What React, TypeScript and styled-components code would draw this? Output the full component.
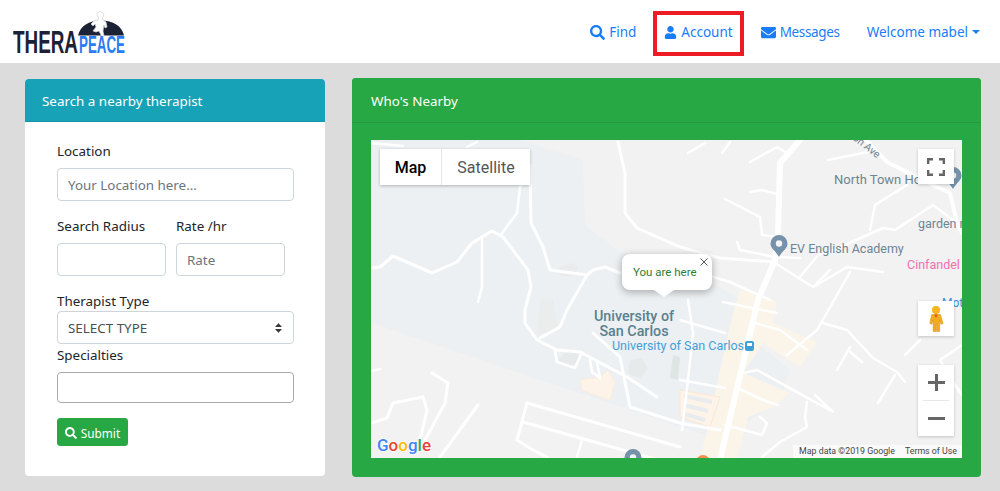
import React from "react";
import styled, { createGlobalStyle } from "styled-components";
import { FaSearch, FaUser, FaEnvelope } from "react-icons/fa";

const Global = createGlobalStyle`
  html, body { margin: 0; padding: 0; background: #dcdcdc; }
  body { font-family: "Noto Sans", "Open Sans", sans-serif; color: #212529; overflow: hidden; }
  * { box-sizing: border-box; }
`;

const Page = styled.div`
  width: 1000px;
  height: 491px;
  display: flex;
  flex-direction: column;
`;
const Navbar = styled.nav`
  height: 63px;
  background: #fff;
  display: flex;
  align-items: center;
  justify-content: space-between;
  padding: 0 9px 0 13px;
`;
const LogoArt = styled.svg`
  display: block;
`;
const NavList = styled.div`
  display: flex;
  align-items: center;
  margin-top: 4px;
`;
const NavLink = styled.a<{ $boxed?: boolean; $ml?: number; $tight?: boolean }>`
  display: flex;
  align-items: center;
  gap: 4px;
  height: 45px;
  margin-left: ${p => p.$ml ?? 0}px;
  padding: 0 7px 3px;
  color: #1a7cf8;
  font-size: 13.5px;
  letter-spacing: ${p => (p.$tight ? "-0.35px" : "0")};
  white-space: nowrap;
  border: 4px solid ${p => (p.$boxed ? "#ed1c24" : "transparent")};
`;
const Caret = styled.span`
  width: 0;
  height: 0;
  border-top: 4.5px solid #1a7cf8;
  border-left: 4px solid transparent;
  border-right: 4px solid transparent;
`;
const Main = styled.main`
  flex: 1;
  display: flex;
  align-items: flex-start;
  gap: 27px;
  padding: 15px 0 0 25px;
`;
const SearchCard = styled.section`
  width: 300px;
  height: 397px;
  margin-top: 1px;
  background: #fff;
  border-radius: 4px;
  overflow: hidden;
`;
const CardHeader = styled.header<{ $bg: string; $pl: number; $h: number }>`
  height: ${p => p.$h}px;
  background: ${p => p.$bg};
  color: #fff;
  font-size: 13.4px;
  display: flex;
  align-items: center;
  padding: 2px 0 0 ${p => p.$pl}px;
  border-bottom: 1px solid rgba(0, 0, 0, 0.08);
`;
const Form = styled.form`
  padding: 19px 31px 0 32px;
  display: flex;
  flex-direction: column;
`;
const Label = styled.label<{ $mt?: number; $mb?: number }>`
  display: block;
  height: 20px;
  line-height: 20px;
  font-size: 13.4px;
  color: #212529;
  margin-top: ${p => p.$mt ?? 0}px;
  margin-bottom: ${p => p.$mb ?? 0}px;
`;
const Input = styled.input<{ $h?: number; $dark?: boolean }>`
  display: block;
  width: 100%;
  height: ${p => p.$h ?? 33}px;
  padding: 0 10px;
  font: 13.4px "Noto Sans", sans-serif;
  color: #495057;
  background: #fff;
  border: 1px solid ${p => (p.$dark ? "#a9a9a9" : "#ced4da")};
  border-radius: 4px;
  outline: none;
  &::placeholder { color: #6c757d; opacity: 1; }
`;
const Row = styled.div`
  display: grid;
  grid-template-columns: 109px 109px;
  gap: 10px;
`;
const SelectWrap = styled.div`
  position: relative;
  height: 33px;
`;
const Select = styled.select`
  display: block;
  width: 100%;
  height: 33px;
  padding: 0 10px;
  font: 13.4px "Noto Sans", sans-serif;
  color: #495057;
  background: #fff;
  border: 1px solid #ced4da;
  border-radius: 4px;
  appearance: none;
  outline: none;
`;
const SelectArrow = styled.svg`
  position: absolute;
  right: 12px;
  top: 12px;
`;
const Submit = styled.button`
  align-self: flex-start;
  margin-top: 15px;
  width: 71px;
  height: 28px;
  display: flex;
  align-items: center;
  justify-content: center;
  gap: 4px;
  padding: 1px 0 0;
  background: #28a745;
  color: #fff;
  border: 1px solid #28a745;
  border-radius: 3px;
  font: 11.8px "Noto Sans", sans-serif;
`;
const MapCard = styled.section`
  width: 629px;
  height: 399px;
  background: #28a745;
  border-radius: 4px;
  overflow: hidden;
`;
const MapBody = styled.div`
  padding: 17px 19px 0;
`;
const MapFrame = styled.div`
  position: relative;
  width: 591px;
  height: 318px;
  background: #f2f2f2;
  overflow: hidden;
  font-family: Roboto, sans-serif;
`;
const MapArt = styled.svg`
  display: block;
  font-family: Roboto, sans-serif;
`;
const MapType = styled.div`
  position: absolute;
  left: 9px;
  top: 9px;
  height: 36px;
  width: 150px;
  display: flex;
  background: #fff;
  box-shadow: 0 1px 3px rgba(0, 0, 0, 0.25);
`;
const MapTab = styled.div<{ $active?: boolean; $w: number }>`
  width: ${p => p.$w}px;
  display: flex;
  align-items: center;
  justify-content: center;
  font-size: 16px;
  font-weight: ${p => (p.$active ? 500 : 400)};
  color: ${p => (p.$active ? "#000" : "#565656")};
  border-right: ${p => (p.$active ? "1px solid #e6e6e6" : "none")};
`;
const MapControl = styled.div<{ $top: number; $h: number }>`
  position: absolute;
  left: 547px;
  top: ${p => p.$top}px;
  width: 36px;
  height: ${p => p.$h}px;
  background: #fff;
  box-shadow: 0 1px 3px rgba(0, 0, 0, 0.2);
  display: flex;
  flex-direction: column;
  align-items: center;
  justify-content: center;
`;
const ZoomBtn = styled.div`
  height: 35px;
  width: 26px;
  display: flex;
  align-items: center;
  justify-content: center;
`;
const ZoomRule = styled.div`
  width: 26px;
  height: 1px;
  background: #e6e6e6;
`;
const InfoWindow = styled.div`
  position: absolute;
  left: 251px;
  top: 114px;
  width: 90px;
  height: 36px;
  background: #fff;
  border-radius: 8px;
  box-shadow: 0 2px 7px 1px rgba(0, 0, 0, 0.25);
  display: flex;
  align-items: center;
  padding: 0 0 0 11px;
  font-size: 11.5px;
  color: #2f7d32;
  &::after {
    content: "";
    position: absolute;
    left: 32px;
    top: 36px;
    border-top: 7px solid #fff;
    border-left: 10px solid transparent;
    border-right: 10px solid transparent;
  }
`;
const InfoClose = styled.svg`
  position: absolute;
  right: 4px;
  top: 4px;
`;
const Attribution = styled.div`
  position: absolute;
  right: 0;
  bottom: 0;
  height: 13px;
  line-height: 13px;
  display: flex;
  gap: 10px;
  padding: 0 5px 0 6px;
  font-size: 8.8px;
  color: #444;
  background: rgba(255, 255, 255, 0.6);
`;

type Road = { w: number; p: string };
const ROADS: Road[] = [
  { w: 2.5, p: "371,143 403,146" },
  { w: 2.5, p: "467,147 477,142" },
  { w: 3, p: "530,165 531,223 543,247 550,270 587,275 593,270 605,267 620,273" },
  { w: 2.5, p: "530,170 520,187 517,213 500,236" },
  { w: 3, p: "371,268 380,267 393,256 432,273 457,262 472,243 492,231 503,237 528,270 531,287 525,310 525,323 537,340 557,350 580,352 627,377 657,397" },
  { w: 2.5, p: "482,240 482,287 478,302" },
  { w: 3, p: "587,275 567,310 560,327 540,338" },
  { w: 3, p: "618,142 625,173 625,213 637,228 680,247 720,258 775,262" },
  { w: 6, p: "800,140 780,163 778,237 775,260 758,300 720,460" },
  { w: 4, p: "866,140 887,162 933,185 950,193 957,223 962,233" },
  { w: 2.5, p: "828,160 853,155 868,152" },
  { w: 2.5, p: "750,162 777,147 787,153" },
  { w: 2.5, p: "688,153 705,143" },
  { w: 2.5, p: "722,153 730,142" },
  { w: 2.5, p: "750,192 762,190 777,194" },
  { w: 2.5, p: "725,199 760,217 762,235 778,237" },
  { w: 2.5, p: "737,242 740,250 775,257 800,258" },
  { w: 2.5, p: "800,277 818,255 827,253 883,228 895,230 933,205 962,227" },
  { w: 2.5, p: "870,230 875,205 907,185" },
  { w: 2.5, p: "775,263 813,287 847,267 883,272" },
  { w: 2.5, p: "813,287 830,270" },
  { w: 2.5, p: "833,302 817,330 787,355" },
  { w: 2.5, p: "850,272 833,302" },
  { w: 2.5, p: "723,302 777,313" },
  { w: 2.5, p: "690,270 730,282 770,300" },
  { w: 2.5, p: "755,323 780,330 807,350" },
  { w: 2.5, p: "823,323 847,330 873,358 897,372 905,382" },
  { w: 2.5, p: "837,370 850,347" },
  { w: 2.5, p: "848,350 862,362" },
  { w: 2.5, p: "878,403 895,375" },
  { w: 2.5, p: "743,373 757,370 833,412 815,395" },
  { w: 2.5, p: "807,402 805,417 807,427 780,442 762,457" },
  { w: 2.5, p: "738,388 763,400 778,405" },
  { w: 2.5, p: "680,320 725,333" },
  { w: 2.5, p: "680,380 725,388" },
  { w: 2.5, p: "725,425 762,435 767,423 760,417" },
  { w: 2.5, p: "688,300 693,333 688,380 682,430" },
  { w: 3, p: "593,333 620,357 630,407 680,423 720,430" },
  { w: 3, p: "527,403 680,447" },
  { w: 3, p: "523,422 680,466" },
  { w: 3, p: "527,403 517,440 533,450 547,457" },
  { w: 2.5, p: "582,440 577,457" },
  { w: 3, p: "371,423 387,418 393,403 423,397 427,410 420,440" },
  { w: 3, p: "432,373 448,383 445,403 425,440" },
  { w: 3, p: "478,405 440,457" },
  { w: 2.5, p: "371,371 380,369" },
  { w: 2.5, p: "555,351 557,362 575,368 582,352" },
  { w: 2.5, p: "590,360 592,372 600,378 597,362" },
  { w: 2.5, p: "920,340 905,355" },
  { w: 2.5, p: "962,345 940,360 955,385 962,395" },
];

const FrameIcon = () => (
  <svg width="18" height="18" viewBox="0 0 18 18" fill="none" stroke="#666" strokeWidth="2.4">
    <path d="M1.2 6V1.2H6M12 1.2h4.8V6M16.8 12v4.8H12M6 16.8H1.2V12" />
  </svg>
);
const Pegman = () => (
  <svg width="16" height="28" viewBox="0 0 18 30">
    <circle cx="9" cy="5" r="4.6" fill="#f7b521" />
    <path d="M4 10h10l3 10-2.4 1-1.4-5V29h-3.4v-9h-.6v9H5.800V16l-1.400 5L2 20z" fill="#f5ac1b" stroke="#c98a12" strokeWidth=".5" />
    <path d="M7 10h4l-2 4z" fill="#d9541e" />
  </svg>
);
const Pin = ({ x, y }: { x: number; y: number }) => (
  <g transform={`translate(${x} ${y})`}>
    <path d="M0 22C-3 16-8.500 14-8.500 8.500a8.500 8.500 0 1 1 17 0C8.500 14 3 16 0 22Z" fill="#7592aa" />
    <circle cx="0" cy="8.500" r="3.200" fill="#f2f4f5" />
  </g>
);

export default function App() {
  return (
    <Page>
      <Global />
      <Navbar>
        <LogoArt width="114" height="46" viewBox="0 0 114 46">
          <path d="M65 26.500C67 17 76 11.500 88 11.500S109 17 111 26.500Z" fill="#1d2136" />
          <path d="M80 22l3-4-1-3-2 2-2-2 3-3 4-1 1-2a3.300 3.300 0 1 1 4-1l-1 2 4 3 1 5-2 1-1-3-1 6 1 5-2 1-3-6-3 1z" fill="#fff" stroke="#cfcfd4" strokeWidth=".7" />
          <text transform="translate(0 43.5) scale(.609 1)" fontFamily="Liberation Sans" fontWeight="700" fontSize="31" fill="#1d2136">THERA</text>
          <text transform="translate(66 43.5) scale(.568 1)" fontFamily="Liberation Sans" fontWeight="700" fontSize="23.500" fill="#2b7bf3">PEACE</text>
        </LogoArt>
        <NavList>
          <NavLink><FaSearch size={15} />Find</NavLink>
          <NavLink $boxed $ml={6}><FaUser size={13} />Account</NavLink>
          <NavLink $ml={6} $tight><FaEnvelope size={15} />Messages</NavLink>
          <NavLink $ml={5}>Welcome mabel<Caret /></NavLink>
        </NavList>
      </Navbar>
      <Main>
        <SearchCard>
          <CardHeader $bg="#17a2b8" $pl={17} $h={43}>Search a nearby therapist</CardHeader>
          <Form>
            <Label $mb={7}>Location</Label>
            <Input placeholder="Your Location here..." />
            <Row>
              <div>
                <Label $mt={15} $mb={7}>Search Radius</Label>
                <Input />
              </div>
              <div>
                <Label $mt={15} $mb={7}>Rate /hr</Label>
                <Input placeholder="Rate" />
              </div>
            </Row>
            <Label $mt={15}>Therapist Type</Label>
            <SelectWrap>
              <Select defaultValue="type"><option value="type">SELECT TYPE</option></Select>
              <SelectArrow width="7" height="10" viewBox="0 0 8 11"><path d="M4 0 8 4.300H0ZM4 11 0 6.700H8Z" fill="#343a40" /></SelectArrow>
            </SelectWrap>
            <Label $mt={1} $mb={7}>Specialties</Label>
            <Input $h={31} $dark />
            <Submit type="button"><FaSearch size={12} />Submit</Submit>
          </Form>
        </SearchCard>
        <MapCard>
          <CardHeader $bg="#28a745" $pl={19} $h={45}>Who's Nearby</CardHeader>
          <MapBody>
            <MapFrame>
              <MapArt width="591" height="318" viewBox="371 140 591 318">
                <path d="M371 140H520L583 160 585 225 620 252 680 262 740 300 760 345 790 370 780 400 720 440 371 323Z" fill="#ecf0f3" />
                <path d="M740 290H752L757 300H777L773 323 817 342 800 367 763 343 743 373 790 393 773 407 748 417 737 458H700L707 432 718 380 733 313Z" fill="#fbf5e9" />
                <path d="M580 380 600 377 608 370 615 383 610 400 600 397 582 390Z" fill="#fdf3e8" stroke="#fcecdc" />
                <path d="M680 390 720 397 710 427 680 417Z" fill="#fdf3e8" stroke="#fae8d6" />
                <path d="M684 396 712 402M684 405 708 411M684 414 705 420" stroke="#e9ecee" strokeWidth="4" />
                <path d="M540 300 553 299 558 330 538 334Z" fill="#ebeded" />
                <path d="M558 268 572 263 578 267 574 276 560 276Z" fill="#e9ebec" />
                <path d="M568 350 578 352 578 362 570 366 558 360Z" fill="#e7eaea" />
                <path d="M630 360 642 358 648 368 640 378 628 374Z" fill="#e7eaea" />
                <path d="M673 355 680 357 678 380 670 378Z" fill="#dfe5e2" />
                <g fill="none" stroke="#fff" strokeLinecap="round" strokeLinejoin="round">
                  {ROADS.map((r, i) => <polyline key={i} points={r.p} strokeWidth={r.w} />)}
                </g>
                <text x="834" y="184" fontSize="13" fill="#6f8492">North Town Ho</text>
                <text x="790" y="253" fontSize="12.500" fill="#6f8492">EV English Academy</text>
                <text x="918" y="227.500" fontSize="12.500" fill="#6f8492">garden m</text>
                <text x="907" y="269" fontSize="12.500" fill="#ee6fb0">Cinfandel</text>
                <text x="942" y="307" fontSize="12" fill="#3a8fd8">Mot</text>
                <text x="852" y="139" fontSize="10.500" fill="#6f8492" transform="rotate(38 852 139)">on Ave</text>
                <text x="634" y="321" fontSize="14.300" fontWeight="500" fill="#5a8090" textAnchor="middle">University of</text>
                <text x="634" y="336" fontSize="14.300" fontWeight="500" fill="#5a8090" textAnchor="middle">San Carlos</text>
                <text x="612" y="350" fontSize="12.500" fill="#3f9fd9">University of San Carlos</text>
                <rect x="745" y="341" width="9" height="10" rx="2" fill="#3f9fd9" />
                <rect x="747" y="343" width="5" height="3" fill="#fff" />
                <Pin x={779} y={235} />
                <Pin x={953} y={167} />
                <Pin x={633} y={449} />
                <circle cx="703" cy="462" r="7" fill="#f2914c" />
                <text x="377" y="451" fontSize="17" fontWeight="500" stroke="#fff" strokeWidth="1.500" paintOrder="stroke">
                  <tspan fill="#4285f4">G</tspan><tspan fill="#ea4335">o</tspan><tspan fill="#fbbc05">o</tspan><tspan fill="#4285f4">g</tspan><tspan fill="#34a853">l</tspan><tspan fill="#ea4335">e</tspan>
                </text>
              </MapArt>
              <MapType>
                <MapTab $active $w={62}>Map</MapTab>
                <MapTab $w={88}>Satellite</MapTab>
              </MapType>
              <MapControl $top={9} $h={35}><FrameIcon /></MapControl>
              <MapControl $top={161} $h={35}><Pegman /></MapControl>
              <MapControl $top={225} $h={71}>
                <ZoomBtn>
                  <svg width="17" height="17" viewBox="0 0 17 17"><path d="M7 0h3v7h7v3h-7v7H7v-7H0V7h7z" fill="#666" /></svg>
                </ZoomBtn>
                <ZoomRule />
                <ZoomBtn>
                  <svg width="17" height="3" viewBox="0 0 17 3"><rect width="17" height="3" fill="#666" /></svg>
                </ZoomBtn>
              </MapControl>
              <InfoWindow>
                You are here
                <InfoClose width="8" height="8" viewBox="0 0 8 8"><path d="M.5.5l7 7M7.500.5l-7 7" stroke="#555" strokeWidth="1" /></InfoClose>
              </InfoWindow>
              <Attribution><span>Map data ©2019 Google</span><span>Terms of Use</span></Attribution>
            </MapFrame>
          </MapBody>
        </MapCard>
      </Main>
    </Page>
  );
}
